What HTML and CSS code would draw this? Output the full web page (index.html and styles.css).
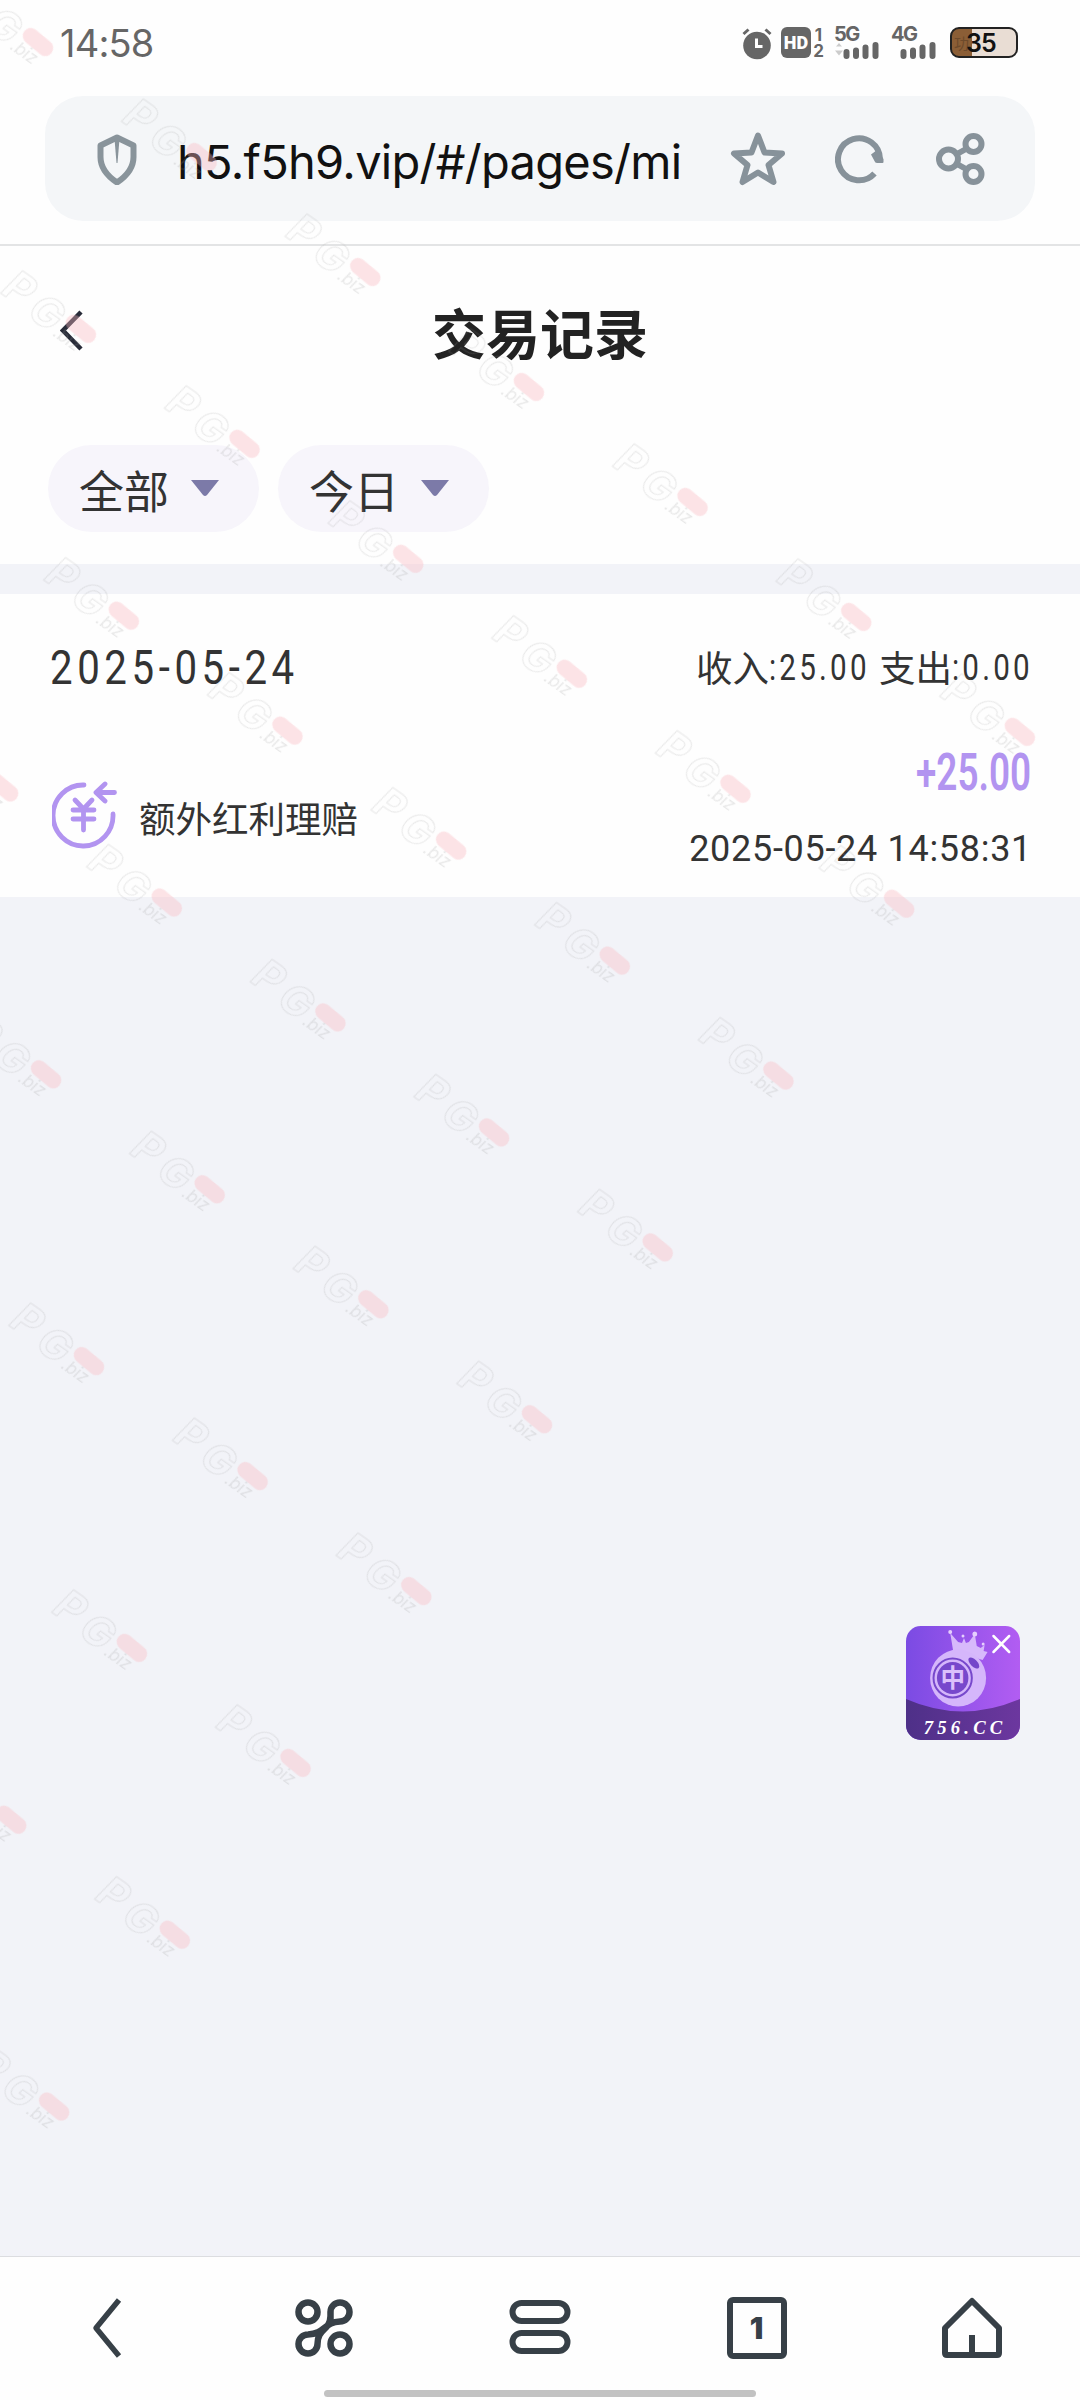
FILE: index.html
```html
<!DOCTYPE html>
<html lang="zh-CN">
<head>
<meta charset="utf-8">
<title>交易记录</title>
<link rel="stylesheet" href="styles.css">
</head>
<body>
<div class="screen">
  <header class="status">
    <span class="clock">14:58</span>
    <div class="status-icons">
      <svg class="alarm" width="30" height="32" viewBox="0 0 30 32"><circle cx="15" cy="17.500" r="13.800" fill="#666"/><path d="M1.500 6 6.500 1.500M28.500 6 23.500 1.500" stroke="#666" stroke-width="3"/><path d="M14.500 10.500v8h6" fill="none" stroke="#fff" stroke-width="3"/></svg>
      <div class="hd"><span class="hd-box">HD</span><span class="hd-num"><i>1</i><i>2</i></span></div>
      <div class="signal"><b>5G</b><svg width="46" height="17" viewBox="0 0 46 17"><path d="M2 4.500 5 1l3 3.500M1 8.500l4 5 4-5z" fill="#ccc"/><path d="M12.500 10v4M22 8.500V14M31.500 5.500V14M41.500 3v11" stroke="#666" stroke-width="6" stroke-linecap="round"/></svg></div>
      <div class="signal second"><b>4G</b><svg width="46" height="17" viewBox="0 0 46 17"><path d="M12.500 10v4M22 8.500V14M31.500 5.500V14M41.500 3v11" stroke="#666" stroke-width="6" stroke-linecap="round"/></svg></div>
      <div class="battery"><span class="charge">功</span><span class="percent">35</span></div>
    </div>
  </header>

  <div class="browser-bar">
    <div class="address">
      <svg class="shield" width="40" height="52" viewBox="0 0 40 52"><path d="M20 4.500 36.500 12.500V24c0 11-6 18.500-16.500 25.500C9.500 42.500 3.500 35 3.500 24V12.500z" fill="none" stroke="#89949b" stroke-width="6" stroke-linejoin="round"/><path d="M17.500 6h5L20.500 30h-1z" fill="#89949b"/></svg>
      <span class="url">h5.f5h9.vip/#/pages/mi</span>
      <svg class="star" width="56" height="56" viewBox="0 0 56 56"><path d="M28 4.500 34.500 21.500 52 22.500 38.500 34 43.500 51 28 41.500 12.500 51 17.500 34 4 22.500 21.500 21.500z" fill="none" stroke="#87929a" stroke-width="6" stroke-linejoin="round"/></svg>
      <svg class="reload" width="50" height="50" viewBox="0 0 50 50"><path d="M39.500 38.500A21 21 0 1 1 45 24" fill="none" stroke="#87929a" stroke-width="6"/><path d="M36 19.500 42 15l6.500 9v3q0 1-1 1H42q-2 0-2.500-2z" fill="#87929a"/></svg>
      <svg class="share" width="50" height="54" viewBox="0 0 50 54"><g fill="none" stroke="#87929a" stroke-width="6"><circle cx="12.500" cy="27" r="9.500"/><circle cx="37.500" cy="12" r="8"/><circle cx="37.500" cy="42" r="8"/><path d="m21 22 9-5M21 32l9 5"/></g></svg>
    </div>
  </div>

  <main class="page">
    <section class="top">
      <div class="titlebar">
        <svg class="back" width="24" height="42" viewBox="0 0 24 42"><path d="M21 2 3 20.500 21 39" fill="none" stroke="#272b38" stroke-width="4.500"/></svg>
        <h1>交易记录</h1>
      </div>
      <div class="filters">
        <div class="pill"><span>全部</span><svg width="28" height="17" viewBox="0 0 28 17"><path d="M0 0h28L16 15q-2 2-4 0z" fill="#7c7aa8"/></svg></div>
        <div class="pill"><span>今日</span><svg width="28" height="17" viewBox="0 0 28 17"><path d="M0 0h28L16 15q-2 2-4 0z" fill="#7c7aa8"/></svg></div>
      </div>
    </section>
    <section class="records">
      <div class="summary">
        <span class="day">2025-05-24</span>
        <div class="totals"><span>收入</span><span class="fig in">:25.00</span><span>支出</span><span class="fig out">:0.00</span></div>
      </div>
      <div class="record">
        <svg class="yen" width="66" height="68" viewBox="0 0 66 68"><g fill="none" stroke="#b294f0" stroke-width="4.800" stroke-linecap="round" stroke-linejoin="round"><path d="M32 4A30 30.500 0 1 0 61 33"/><path d="m23 19 8.500 9 8.500-9M21 29h21M21 38h21M31.500 29v20"/><path d="M62.500 11.500h-18M53 3l-9 8.500 9 8.500"/></g></svg>
        <span class="kind">额外红利理赔</span>
        <div class="right">
          <span class="amount">+25.00</span>
          <span class="time">2025-05-24 14:58:31</span>
        </div>
      </div>
    </section>
  </main>

  <nav class="toolbar">
    <svg width="60" height="62" viewBox="0 0 60 62"><path d="M41 3 18 31 41 59" fill="none" stroke="#374047" stroke-width="5.500" stroke-linejoin="round"/></svg>
    <svg width="60" height="62" viewBox="0 0 60 62"><g transform="translate(1)" fill="none" stroke="#374047" stroke-width="6.500"><circle cx="14" cy="15" r="9.500"/><circle cx="46" cy="47" r="9.500"/><path d="M36.500 23.500V15A9.500 9.500 0 1 1 46 24.500C30 25 31 37 14 37.500A9.500 9.500 0 1 0 23.500 47C23.500 31 36 34 36.500 19"/></g></svg>
    <svg width="62" height="62" viewBox="0 0 62 62"><g fill="none" stroke="#374047" stroke-width="6"><rect x="3.500" y="6" width="55" height="18" rx="9"/><rect x="3.500" y="36" width="55" height="18" rx="9"/></g></svg>
    <div class="tab-count">1</div>
    <svg width="60" height="62" viewBox="0 0 60 62"><path d="M3 31 30 4 57 31V56q0 2-2 2H5q-2 0-2-2zM30 38v19" fill="none" stroke="#374047" stroke-width="6" stroke-linejoin="round"/></svg>
  </nav>
  <div class="home-indicator"></div>

  <div class="promo">
    <svg width="114" height="114" viewBox="0 0 116 114" preserveAspectRatio="none">
      <defs><linearGradient id="bg" x2="1"><stop stop-color="#7b4be3"/><stop offset="1" stop-color="#b25df2"/></linearGradient><linearGradient id="base" x2="1"><stop stop-color="#4e3088"/><stop offset="1" stop-color="#6c379f"/></linearGradient><clipPath id="card"><rect width="116" height="114" rx="15"/></clipPath></defs>
      <g clip-path="url(#card)"><rect width="116" height="114" fill="url(#bg)"/><path d="M0 73Q58 98 116 73V114H0z" fill="url(#base)"/></g>
      <path d="M48 25 45 7l8 9 4 1 2-5 2 5 3-1 6-8 2 12 4 2 4-3-1 6 4 1-5 8z" fill="#d7b9fb"/>
      <circle cx="45" cy="6" r="2" fill="#e5cffd"/><circle cx="58" cy="10" r="1.500" fill="#e5cffd"/><circle cx="70" cy="8" r="2.500" fill="#e5cffd"/><circle cx="78.500" cy="18" r="1.500" fill="#e5cffd"/>
      <circle cx="53" cy="52" r="28.500" fill="#d5b6fb"/><ellipse cx="69" cy="37" rx="7" ry="3.500" transform="rotate(45 69 37)" fill="#7445ca"/>
      <circle cx="47.500" cy="52" r="19.500" fill="#d5b6fb" stroke="#7748cc" stroke-width="2"/><circle cx="47.500" cy="52" r="16" fill="#7748cc"/>
      <text x="47.500" y="61" text-anchor="middle" class="tile">中</text>
      <path d="m89 10 16 16M105 10 89 26" stroke="#fff" stroke-width="2.500" stroke-linecap="round"/>
      <text x="18" y="108" textLength="80" class="brand">756.CC</text>
    </svg>
  </div>

  <svg class="watermark" width="1080" height="2400" viewBox="0 0 1080 2400" aria-hidden="true">
    <defs>
      <pattern id="mark" width="200" height="210" x="-150" y="-100" patternUnits="userSpaceOnUse">
        <g transform="translate(150 102)">
          <g class="mark-letters"><text x="-87" y="17">P</text><text x="-53" y="21">G</text></g>
          <text x="-20" y="22" class="mark-biz">.biz</text>
          <rect x="-17.500" y="-8" width="35" height="16" rx="8" transform="rotate(5)" fill="#f9b9c0" fill-opacity=".38"/>
        </g>
      </pattern>
    </defs>
    <g transform="translate(125 614) rotate(35.090)"><rect x="-2550" y="-520" width="3400" height="2100" fill="url(#mark)"/></g>
  </svg>
</div>
</body>
</html>
```
FILE: styles.css
```css
* { box-sizing: border-box; }
body { margin: 0; background: #f2f3f8; color: #333; font-family: Roboto, "Noto Sans CJK SC", sans-serif; }
svg { display: block; flex: none; }
.screen { position: relative; width: 1080px; height: 2400px; display: flex; flex-direction: column; overflow: hidden; }

.status { height: 96px; flex: none; background: #fefefe; display: flex; justify-content: space-between; align-items: flex-start; padding: 27px 62px 0 60px; }
.clock { margin-top: -1px; font: 38px/34px Inter, sans-serif; color: #666; letter-spacing: -.8px; }
.status-icons { display: flex; align-items: flex-start; color: #666; }
.alarm { margin-top: 1px; }
.hd { display: flex; margin: 0 0 0 9px; height: 31px; gap: 2px; }
.hd-box { width: 30px; height: 31px; border-radius: 6px; background: #666; color: #fff; font: 900 18px/31px Roboto, sans-serif; text-align: center; }
.hd-num { width: 11px; font: bold 17px/16px Inter, sans-serif; display: flex; flex-direction: column; text-align: center; }
.hd-num i { font-style: normal; height: 17px; }
.signal { width: 46px; height: 32px; margin-left: 10px; display: flex; flex-direction: column; }
.signal b { font: bold 20px/15px Inter, sans-serif; letter-spacing: -1.5px; }
.signal.second { margin-left: 11px; }
.battery { width: 68px; height: 31px; margin-left: 13px; border: 2px solid #222; border-radius: 9px; background: linear-gradient(90deg, #8b5e36 31%, #e9ddd4 31%); display: flex; align-items: center; }
.charge { font-size: 15px; color: #6d4a2b; margin-left: 2px; }
.percent { font: 600 25px/28px Inter, sans-serif; color: #111; margin-left: -3px; letter-spacing: -1px; }

.browser-bar { height: 150px; flex: none; background: #fefefe; border-bottom: 2px solid #e3e4e5; padding: 0 45px; }
.address { height: 125px; margin-bottom: 0; border-radius: 38px; background: #f4f6f8; display: flex; align-items: flex-start; padding: 37px 49px 0 52px; }
.url { font: 47px/60px Inter, sans-serif; color: #111; letter-spacing: -.72px; width: 506px; margin: -1px 49px 0 40px; white-space: nowrap; }
.star { margin: -2px 49px 0 0; }
.reload { margin: 2px 51px 0 0; }
.share { margin-top: -1px; }

.page { flex: 1; }
.top { height: 318px; background: #fefefe; padding: 50px 48px 0; }
.titlebar { height: 149px; display: flex; padding: 14px 0 0 12px; }
.titlebar h1 { margin: -16px 0 0 -36px; flex: 1; text-align: center; font: bold 54px/76px "Noto Sans CJK SC", sans-serif; color: #222; }
.filters { display: flex; gap: 19px; }
.pill { width: 211px; height: 87px; border-radius: 44px; background: #f7f5fb; display: flex; align-items: center; padding: 0 0 0 31px; gap: 22px; font: 400 45px/87px "Noto Sans CJK SC", sans-serif; }
.pill span { width: 90px; margin-top: 2px; }

.records { background: #fefefe; height: 303px; margin-top: 30px; padding: 47px 49px 0 50px; }
.summary { display: flex; justify-content: space-between; height: 100px; }
.day { width: 250px; font-size: 49px; line-height: 54px; letter-spacing: 5.6px; white-space: nowrap; transform: scaleX(.82); transform-origin: left; }
.totals { margin-top: 0; font: 36.500px/52px "Noto Sans CJK SC", sans-serif; display: flex; }
.fig { font: 400 37px/54px Roboto, sans-serif; letter-spacing: 4px; white-space: nowrap; transform: scaleX(.8); transform-origin: left; }
.fig.in { width: 110px; }
.fig.out { width: 79px; }
.record { display: flex; height: 150px; }
.yen { margin: 40px 0 0 2px; }
.kind { font: 36.500px/52px "Noto Sans CJK SC", sans-serif; margin: 51px 0 0 21px; }
.right { margin-left: auto; display: flex; flex-direction: column; align-items: flex-end; }
.amount { margin-top: 2px; font-size: 52px; line-height: 60px; color: #b294f0; font-weight: 600; transform: scaleX(.71); transform-origin: right; }
.time { font-size: 36px; line-height: 44px; margin: 24px -1px 0 0; letter-spacing: .7px; }

.toolbar { height: 144px; flex: none; background: #fefefe; border-top: 1px solid #dcdde0; display: flex; justify-content: space-around; padding-top: 40px; }
.tab-count { width: 60px; height: 62px; border: 6px solid #374047; border-radius: 6px; color: #374047; font: 900 30px/50px Inter, sans-serif; text-align: center; }
.home-indicator { position: absolute; left: 324px; top: 2390px; width: 432px; height: 7px; border-radius: 4px; background: #c2c2c2; }
.promo { position: absolute; left: 906px; top: 1626px; }
.tile { font: bold 25px "Noto Sans CJK SC", sans-serif; fill: #dbc0fb; }
.brand { font: italic bold 19px "Liberation Serif", serif; fill: #fff; }
.watermark { position: absolute; left: 0; top: 0; pointer-events: none; }
.mark-letters { font: italic bold 42px Inter, sans-serif; fill: none; stroke: #999; stroke-opacity: .22; stroke-width: 1; }
.mark-biz { font: italic 17px Inter, sans-serif; fill: #999; fill-opacity: .22; }
```
